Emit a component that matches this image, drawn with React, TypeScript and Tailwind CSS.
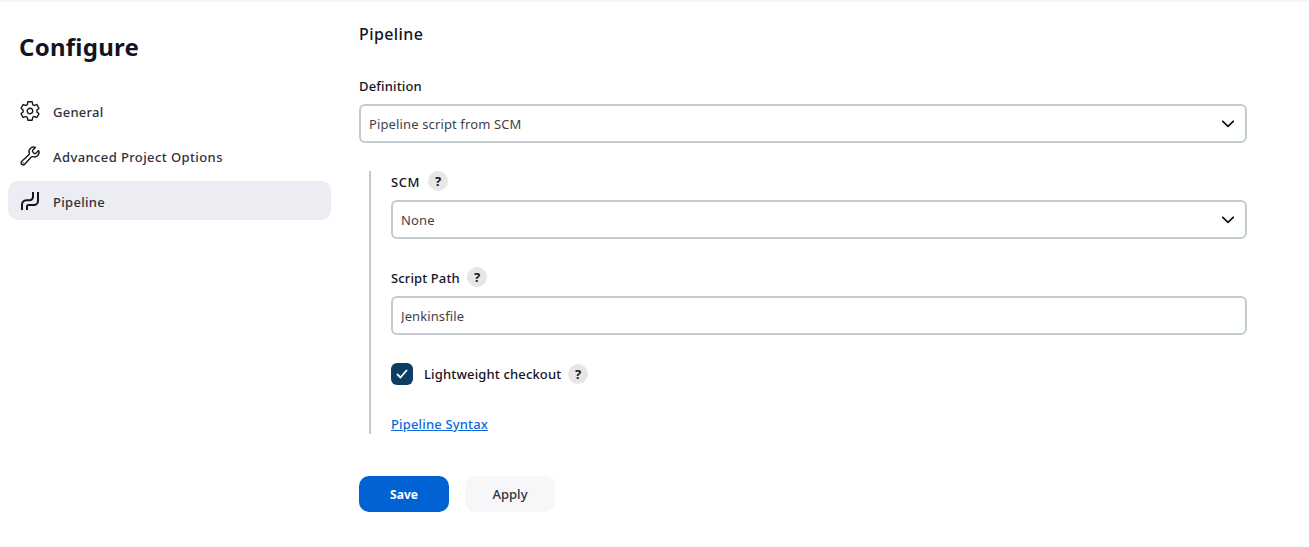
import type { ReactNode } from 'react';
import { IoSettingsOutline, IoBuildOutline } from 'react-icons/io5';

function PipelineIcon() {
  return (
    <svg viewBox="0 0 20 20" className="size-5" fill="none" stroke="currentColor" strokeWidth="2">
      <path d="M2 19v-5.5a4.3 4.3 0 0 1 4.3-4.3h3.2a3.5 3.5 0 0 0 3.5-3.5V1" />
      <path d="M7 19v-3.4a1.6 1.6 0 0 1 1.6-1.6h5.2A4.2 4.2 0 0 0 18 9.800V1" />
    </svg>
  );
}

function NavItem({ icon, active, tracking, children }: { icon: ReactNode; active?: boolean; tracking: string; children: ReactNode }) {
  return (
    <a className={`flex h-[39px] items-center gap-[13px] rounded-[10px] pl-3 text-[13px] leading-5 font-medium ${active ? 'bg-[#ecedf3]' : ''}`}>
      <span className="flex size-5 items-center justify-center">{icon}</span>
      <span className={`pt-[2px] text-[#31313d] ${tracking}`}>{children}</span>
    </a>
  );
}

function Help() {
  return (
    <button className="flex size-5 items-center justify-center rounded-full bg-[#e6e6e6] text-[13px] leading-5 font-bold">?</button>
  );
}

function Select({ value }: { value: string }) {
  return (
    <div className="flex h-[39px] items-center justify-between rounded-md border-2 border-[#c0cccf] pr-[10px] pl-2 text-[13px]">
      <span className="tracking-[0.13px] text-[#3f3f4a]">{value}</span>
      <svg viewBox="0 0 14 10" className="h-[10px] w-[14px]" fill="none" stroke="currentColor" strokeWidth="1.8" strokeLinecap="round" strokeLinejoin="round">
        <path d="M1.8 2.3 7 7.3l5.200-5" />
      </svg>
    </div>
  );
}

export default function App() {
  return (
    <div className="flex h-[547px] w-[1309px] flex-col overflow-hidden border-t-2 border-[#f4f4f4] bg-white font-['Noto_Sans',sans-serif] text-[#14141f]">
      <div className="flex">
        <aside className="w-[331px] shrink-0 pl-2">
          <h1 className="mt-[27px] pl-[11px] text-[24px] leading-9 font-bold tracking-[0.25px]">Configure</h1>
          <nav className="mt-[26px] flex flex-col gap-[6px]">
            <NavItem tracking="tracking-[0.25px]" icon={<IoSettingsOutline className="size-[22px] shrink-0" />}>General</NavItem>
            <NavItem tracking="tracking-[0.4px]" icon={<IoBuildOutline className="size-[22px] shrink-0" />}>Advanced Project Options</NavItem>
            <NavItem tracking="tracking-[0.3px]" active icon={<PipelineIcon />}>Pipeline</NavItem>
          </nav>
        </aside>
        <main className="ml-7 w-[888px] text-[13px] leading-5 font-medium">
          <h2 className="mt-5 text-[16px] leading-6 tracking-[0.4px]">Pipeline</h2>
          <div className="mt-[30px] mb-2 h-5 tracking-[0.15px]">Definition</div>
          <div className="font-normal"><Select value="Pipeline script from SCM" /></div>
          <section className="mt-7 ml-[10px] h-[263px] border-l-2 border-[#c0cccf] pl-5">
            <div className="flex h-5 gap-2"><span className="w-[29px] pt-px tracking-[0.6px]">SCM</span><Help /></div>
            <div className="mt-[9px] font-normal"><Select value="None" /></div>
            <div className="mt-7 flex h-5 gap-[7px]"><span className="w-[69px] pt-px tracking-[0.12px] whitespace-nowrap">Script Path</span><Help /></div>
            <input
              className="mt-[9px] block h-[39px] w-full rounded-md border-2 border-[#c0cccf] px-2 font-normal tracking-[0.1px] text-[#3f3f4a] outline-none"
              defaultValue="Jenkinsfile"
            />
            <div className="mt-7 flex h-[22px] items-center">
              <span className="flex size-[22px] items-center justify-center rounded-md bg-[#0b3e62]">
                <svg viewBox="0 0 12 10" className="h-[10px] w-3" fill="none" stroke="white" strokeWidth="1.8" strokeLinecap="round" strokeLinejoin="round">
                  <path d="m1.500 5.500 3 3 6-7" />
                </svg>
              </span>
              <span className="mr-[7px] ml-[11px] w-[137px] tracking-[0.15px] whitespace-nowrap">Lightweight checkout</span>
              <Help />
            </div>
            <a className="mt-[29px] block w-fit tracking-[0.16px] text-[#0b6bdc] underline">Pipeline Syntax</a>
          </section>
          <div className="mt-[42px] flex gap-4">
            <button className="h-9 w-[90px] rounded-[10px] bg-[#0062d3] pt-px text-[12px] font-bold text-white">Save</button>
            <button className="h-9 w-[90px] rounded-[10px] bg-[#f7f7f9] text-[13px] font-medium text-[#31313d]">Apply</button>
          </div>
        </main>
      </div>
    </div>
  );
}
